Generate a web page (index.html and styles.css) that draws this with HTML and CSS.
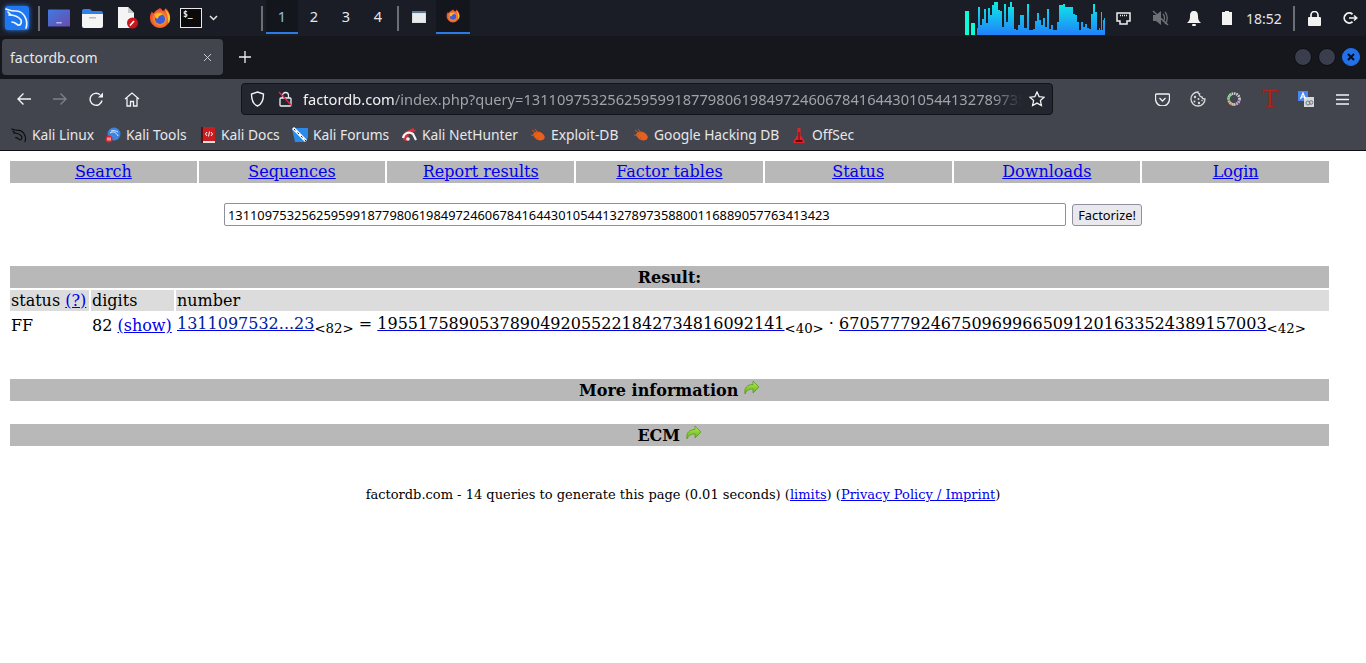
FILE: index.html
```html
<!DOCTYPE html>
<html>
<head>
	<meta charset="utf-8">
	<title>factordb.com</title>
	<link rel="stylesheet" href="styles.css">
</head>
<body>
	<svg class="defs" width="0" height="0">
		<defs>
			<linearGradient id="spec" gradientUnits="userSpaceOnUse" x1="0" y1="0" x2="0" y2="34">
				<stop offset="0" stop-color="#0cf0e4"/>
				<stop offset="1" stop-color="#2180fb"/>
			</linearGradient>
			<linearGradient id="folder" x1="0" y1="0" x2="1" y2="1">
				<stop offset="0" stop-color="#3f7be0"/>
				<stop offset="1" stop-color="#6a4bb0"/>
			</linearGradient>
			<linearGradient id="arrow" x1="0" y1="0" x2="0" y2="1">
				<stop offset="0" stop-color="#b6ec4a"/>
				<stop offset="1" stop-color="#5fb01e"/>
			</linearGradient>
			<radialGradient id="fox" cx="0.5" cy="0.55" r="0.55">
				<stop offset="0.35" stop-color="#f7a12c"/>
				<stop offset="1" stop-color="#e8372e"/>
			</radialGradient>
			<symbol id="dragon" viewBox="0 0 24 24">
				<path d="M1 3c3 1 5 2 10 2 4 0 8 3 10 8 1 3 1 6 0 9M4 9c4 0 9 1 12 5 1 3-1 6-3 5-2-1-3-3-6-3M3 6l3 3" fill="none" stroke-width="1.700" stroke-linecap="round"/>
			</symbol>
			<symbol id="foxicon" viewBox="0 0 24 24">
				<path d="M12 1c2 1 2 2 3 3 2 0 3-1 3-3 3 2 5 6 5 10 0 7-5 12-11 12S1 18 1 12c0-3 1-5 2-7l2 2c1-2 3-4 7-6z" fill="url(#fox)"/>
				<path d="M17 2c3 2 6 6 6 10 0 3-1 5-2 6 0-6-1-11-4-16z" fill="#fbc02d"/>
				<circle cx="12" cy="13" r="5.500" fill="#3f5bd8"/>
				<path d="M6 8c3-2 7-2 9 0l-4 2-2 3c-2-1-3-3-3-5z" fill="#ffb52e"/>
			</symbol>
			<symbol id="bug" viewBox="0 0 16 14">
				<ellipse cx="9" cy="8" rx="6" ry="4" transform="rotate(25 9 8)" fill="#e8601c"/>
				<path d="M2 2l5 4M5 1l3 4M1 7l5 1M7 12l1-3" stroke="#c9581f" stroke-width="1" fill="none"/>
			</symbol>
			<symbol id="goarrow" viewBox="0 0 16 15">
				<path d="M1 14C0 8 3 4.500 9 4.500V1l6 6-6 6V9c-4 0-6 1-8 5z" fill="url(#arrow)" stroke="#5a9a1e" stroke-width=".8"/>
			</symbol>
		</defs>
	</svg>

	<div class="panel">
		<div class="kali">
			<svg width="24" height="24" viewBox="0 0 24 24" stroke="#eef6ff"><use href="#dragon"/></svg>
		</div>
		<span class="vsep first"></span>
		<svg class="launcher l1" width="22" height="18" viewBox="0 0 23 18"><rect width="23" height="18" rx="1" fill="url(#folder)"/><path d="M9 14h5" stroke="#e8e8ff" stroke-width="1.400" stroke-dasharray="1.200 .7"/></svg>
		<svg class="launcher l2" width="23" height="20" viewBox="0 0 23 20"><path d="M1 3a2 2 0 0 1 2-2h6l2 2h9a2 2 0 0 1 2 2v3H1z" fill="#2f80e8"/><path d="M1 6h21v12a2 2 0 0 1-2 2H3a2 2 0 0 1-2-2z" fill="#f4f4f4"/><rect x="8" y="9" width="7" height="1.500" fill="#bcbcbc"/></svg>
		<svg class="launcher l3" width="22" height="22" viewBox="0 0 22 22"><path d="M1 0h10l6 6v15H1z" fill="#f4f4f4"/><path d="M11 0l6 6h-6z" fill="#c8c8c8"/><circle cx="15.500" cy="16" r="5.500" fill="#c8161d"/><path d="M13 18.500l4-4.500" stroke="#fff" stroke-width="1.600"/></svg>
		<svg class="launcher l4" width="22" height="22"><use href="#foxicon"/></svg>
		<div class="term">$_</div>
		<svg class="chev" width="9" height="6" viewBox="0 0 9 6"><path d="M1 1l3.500 3.500L8 1" fill="none" stroke="#e6e6e6" stroke-width="1.500"/></svg>
		<span class="vsep second"></span>
		<div class="ws active">1</div>
		<div class="ws">2</div>
		<div class="ws">3</div>
		<div class="ws">4</div>
		<span class="vsep third"></span>
		<div class="task">
			<svg width="14" height="12" viewBox="0 0 14 12"><rect width="14" height="12" fill="#d8dde0"/><rect width="14" height="2" fill="#5a7c96"/><rect x="1" y="2.500" width="12" height="8.500" fill="#e8ecec"/></svg>
		</div>
		<div class="task active">
			<svg width="14" height="14"><use href="#foxicon"/></svg>
		</div>

		<div class="tray">
			<svg class="spectrum" width="140" height="34" viewBox="0 0 140 34">
				<rect x="0" y="10" width="4" height="24" fill="#0dfbd6"/>
				<rect x="6" y="22" width="4" height="12" fill="#0dfbd6"/>
				<rect x="12" y="29" width="128" height="5" fill="url(#spec)"/>
				<path fill="url(#spec)" d="M12 34v-7h1v7zM13 34v-28h2v28zM15 34v-10h2v10zM17 34v-16h2v16zM19 34v-26h2v26zM21 34v-12h2v12zM23 34v-27h2v27zM25 34v-20h2v20zM27 34v-30h2v30zM29 34v-33h4v33zM33 34v-25h2v25zM35 34v-24h2v24zM37 34v-8h2v8zM39 34v-31h2v31zM41 34v-13h2v13zM43 34v-28h2v28zM45 34v-33h2v33zM47 34v-28h2v28zM49 34v-6h2v6zM51 34v-4h2v4zM53 34v-10h2v10zM55 34v-20h2v20zM57 34v-20h2v20zM59 34v-7h3v7zM62 34v-31h2v31zM64 34v-3h2v3zM66 34v-3h2v3zM68 34v-6h2v6zM70 34v-14h2v14zM72 34v-22h2v22zM74 34v-15h2v15zM76 34v-10h2v10zM78 34v-17h2v17zM80 34v-8h2v8zM82 34v-26h2v26zM84 34v-6h2v6zM86 34v-10h2v10zM88 34v-5h2v5zM90 34v-5h2v5zM92 34v-13h2v13zM94 34v-30h4v30zM98 34v-31h2v31zM100 34v-28h6v28zM106 34v-28h2v28zM108 34v-21h2v21zM110 34v-20h2v20zM112 34v-13h2v13zM114 34v-5h2v5zM116 34v-13h2v13zM118 34v-8h2v8zM120 34v-11h2v11zM122 34v-7h2v7zM124 34v-6h2v6zM126 34v-21h2v21zM128 34v-31h2v31zM130 34v-23h2v23zM132 34v-5h2v5zM134 34v-7h1v7zM135 34v-4h1v4zM136 34v-23h1v23zM137 34v-5h1v5zM138 34v-15h1v15zM139 34v-17h1v17z"/>
			</svg>
			<svg class="tr net" width="15" height="13" viewBox="0 0 15 13"><path d="M1 1h13v8h-3v3H4V9H1z" fill="none" stroke="#eee" stroke-width="1.500"/><path d="M4 3.500h7" stroke="#eee" stroke-width="1.500" stroke-dasharray="1 1"/></svg>
			<svg class="tr mute" width="18" height="16" viewBox="0 0 18 16"><path d="M1 5h3l5-4v14l-5-4H1z" fill="#6f7075"/><path d="M11 4c2 2 2 6 0 8M13 2c3 3 3 9 0 12" fill="none" stroke="#6f7075" stroke-width="1.300"/><path d="M1 1l15 14" stroke="#6f7075" stroke-width="1.500"/></svg>
			<svg class="tr bell" width="14" height="15" viewBox="0 0 14 15"><path d="M7 0c3 0 4 2 4 5 0 4 1 5 3 7H0c2-2 3-3 3-7 0-3 1-5 4-5z" fill="#f2f2f0"/><rect x="5" y="13" width="4" height="2" rx="1" fill="#f2f2f0"/></svg>
			<svg class="tr batt" width="10" height="14" viewBox="0 0 10 14"><path d="M3 0h4v1h3v13H0V1h3z" fill="#f2f2f0"/></svg>
			<div class="clock">18:52</div>
			<span class="vsep fourth"></span>
			<svg class="tr lock" width="13" height="15" viewBox="0 0 13 15"><rect y="6" width="13" height="9" rx="1" fill="#f2f2f0"/><path d="M3 7V4a3.500 3.500 0 0 1 7 0v3" fill="none" stroke="#f2f2f0" stroke-width="1.700"/></svg>
			<svg class="tr quit" width="15" height="12" viewBox="0 0 15 12"><path d="M9.500 2.200A5 5 0 1 0 9.500 9.800" fill="none" stroke="#f2f2f0" stroke-width="1.800"/><path d="M6 6h7M11 3.500L13.800 6 11 8.500" fill="none" stroke="#f2f2f0" stroke-width="1.500"/></svg>
		</div>
	</div>

	<div class="tabbar">
		<div class="tab">
			<span class="tab-title">factordb.com</span>
			<svg width="9" height="9" viewBox="0 0 9 9"><path d="M1 1l7 7M8 1L1 8" stroke="#c9cace" stroke-width="1"/></svg>
		</div>
		<svg class="newtab" width="12" height="12" viewBox="0 0 12 12"><path d="M6 0v12M0 6h12" stroke="#f0f0f2" stroke-width="1.300"/></svg>
		<div class="winbtns">
			<span class="winbtn"></span>
			<span class="winbtn"></span>
			<span class="winbtn close">
				<svg width="8" height="8" viewBox="0 0 8 8"><path d="M1 1l6 6M7 1L1 7" stroke="#08101e" stroke-width="2"/></svg>
			</span>
		</div>
	</div>

	<div class="navbar">
		<svg class="nb back" width="16" height="14" viewBox="0 0 16 14"><path d="M15 7H2M7.500 1.500L2 7l5.500 5.500" fill="none" stroke="#f2f2f3" stroke-width="1.400"/></svg>
		<svg class="nb fwd" width="16" height="14" viewBox="0 0 16 14"><path d="M1 7h13M8.500 1.500L14 7l-5.500 5.500" fill="none" stroke="#7f8085" stroke-width="1.400"/></svg>
		<svg class="nb reload" width="15" height="15" viewBox="0 0 15 15"><path d="M13 8.500A6 6 0 1 1 11 2.700" fill="none" stroke="#f2f2f3" stroke-width="1.400"/><path d="M14 .5v5h-5z" fill="#f2f2f3"/></svg>
		<svg class="nb home" width="16" height="15" viewBox="0 0 16 15"><path d="M1 7l7-6 7 6M3 6v8h3.500V9.500h3V14H13V6" fill="none" stroke="#f2f2f3" stroke-width="1.300"/></svg>
		<div class="urlbar">
			<svg class="shield" width="15" height="16" viewBox="0 0 15 16"><path d="M7.500 1l6 2c0 6-1 10-6 12C2.500 13 1.500 9 1.500 3z" fill="none" stroke="#f2f2f3" stroke-width="1.400"/></svg>
			<svg class="insecure" width="15" height="16" viewBox="0 0 15 16"><rect x="2" y="7" width="11" height="8" rx="1" fill="none" stroke="#f2f2f3" stroke-width="1.300"/><path d="M4.500 7V4.500a3 3 0 0 1 6 0V7" fill="none" stroke="#f2f2f3" stroke-width="1.300"/><path d="M1 1l13 14" stroke="#e22850" stroke-width="1.300"/></svg>
			<div class="url"><span class="host">factordb.com</span>/index.php?query=1311097532562595991877980619849724606784164430105441327897358800116889057763413423</div>
			<svg class="star" width="16" height="16" viewBox="0 0 16 16"><path d="M8 1l2.100 4.600 5 .6-3.700 3.400 1 4.900L8 12.100l-4.400 2.400 1-4.900L.9 6.200l5-.6z" fill="none" stroke="#f2f2f3" stroke-width="1.300"/></svg>
		</div>
		<div class="tools">
			<svg width="15" height="13" viewBox="0 0 15 13"><path d="M1.500 1h12a1 1 0 0 1 1 1v4a7 7 0 0 1-14 0V2a1 1 0 0 1 1-1z" fill="none" stroke="#f2f2f3" stroke-width="1.300"/><path d="M4.500 5l3 3 3-3" fill="none" stroke="#f2f2f3" stroke-width="1.300"/></svg>
			<svg width="16" height="16" viewBox="0 0 16 16"><path d="M8 1a7 7 0 1 0 7 7c-2 0-3-1-3-2-2 0-3-2-2.500-3C8.500 3 8 2 8 1z" fill="none" stroke="#d8d9dc" stroke-width="1.300"/><g fill="#d8d9dc"><circle cx="5" cy="6" r="1.200"/><circle cx="4.500" cy="10.500" r="1"/><circle cx="8.500" cy="8" r="1"/><circle cx="9" cy="12" r="1.200"/><circle cx="12" cy="9.500" r=".8"/></g></svg>
			<svg width="16" height="16" viewBox="0 0 16 16" fill="none" stroke-width="2.600"><circle cx="8" cy="8" r="5.500" stroke="#d3d3d3" stroke-dasharray="1.500 .8"/><path d="M2.500 8a5.500 5.500 0 0 1 3-4.900" stroke="#7fd08a" stroke-dasharray="1.500 .8"/><path d="M8 13.500a5.500 5.500 0 0 1-5-3.500" stroke="#e2a05a" stroke-dasharray="1.500 .8"/><path d="M13.500 8a5.500 5.500 0 0 1-3 4.900" stroke="#c98ad8" stroke-dasharray="1.500 .8"/></svg>
			<div class="red-t">T</div>
			<svg width="16" height="16" viewBox="0 0 16 16"><rect x="0" y="0" width="10" height="10" fill="#4a86f0"/><rect x="6" y="6" width="10" height="10" fill="#d6d8da"/><path d="M2.500 8L5 2l2.500 6M3.500 6h3" fill="none" stroke="#fff" stroke-width="1.200"/><circle cx="10" cy="12" r="2" fill="none" stroke="#6f7a82" stroke-width="1"/><circle cx="13" cy="11.500" r="1.800" fill="none" stroke="#6f7a82" stroke-width="1"/></svg>
			<svg width="13" height="11" viewBox="0 0 13 11"><path d="M0 1h13M0 5.500h13M0 10h13" stroke="#f2f2f3" stroke-width="1.300"/></svg>
		</div>
	</div>

	<div class="bookmarks">
		<div class="bm b1"><svg stroke="#0c0c0e"><use href="#dragon"/></svg>Kali Linux</div>
		<div class="bm b2">
			<svg viewBox="0 0 16 16"><circle cx="9" cy="7" r="6.500" fill="#3c84e0"/><path d="M5 6c3-2 6-1 8 3M6 4c3-1 5 0 7 1" fill="none" stroke="#dcecff" stroke-width="1"/><circle cx="4" cy="12" r="3.500" fill="#d8262c"/><path d="M3 10.500v3M5 10.500v3" stroke="#fff" stroke-width="1"/></svg>Kali Tools
		</div>
		<div class="bm b3">
			<svg viewBox="0 0 14 16"><rect x="1" y="0" width="13" height="14" fill="#c81e22"/><rect x="1" y="14" width="13" height="2" fill="#e0e0e0"/><rect x="0" y="0" width="2" height="16" fill="#5a1014"/><path d="M6 5L4.500 7 6 9M10 5l1.500 2L10 9M8.500 4.500l-1 5" fill="none" stroke="#fff" stroke-width="1"/></svg>Kali Docs
		</div>
		<div class="bm b4">
			<svg viewBox="0 0 16 16"><path d="M0 2l3-1 13 0v10l-4 4H3z" fill="#2c8ae8"/><path d="M1 1l13 13" stroke="#fff" stroke-width="3"/><path d="M2 2l12 12" stroke="#222" stroke-width="1" stroke-dasharray="2 3"/></svg>Kali Forums
		</div>
		<div class="bm b5">
			<svg viewBox="0 0 16 16"><path d="M2 13L4 5l8-4 3 3-7 3-2 7z" fill="#d8303a"/><path d="M2 11c1-5 6-7 10-4l3 6" fill="none" stroke="#f4f4f4" stroke-width="2.200"/><circle cx="7" cy="12" r="1.800" fill="#f4f4f4"/></svg>Kali NetHunter
		</div>
		<div class="bm b6"><svg><use href="#bug"/></svg>Exploit-DB</div>
		<div class="bm b7"><svg><use href="#bug"/></svg>Google Hacking DB</div>
		<div class="bm b8">
			<svg viewBox="0 0 14 16"><path d="M5.500 1h3v7l4 6v2h-11v-2l4-6z" fill="#e2242a"/><path d="M6.500 5h1v9h-1zM3.500 13h7v2h-7z" fill="#5a0c10"/></svg>OffSec
		</div>
	</div>

	<div class="page">
		<table class="menu">
			<tr>
				<td><a href="#">Search</a></td>
				<td><a href="#">Sequences</a></td>
				<td><a href="#">Report results</a></td>
				<td><a href="#">Factor tables</a></td>
				<td><a href="#">Status</a></td>
				<td><a href="#">Downloads</a></td>
				<td><a href="#">Login</a></td>
			</tr>
		</table>

		<div class="search">
			<input class="query" type="text" value="1311097532562595991877980619849724606784164430105441327897358800116889057763413423">
			<button class="go">Factorize!</button>
		</div>

		<table class="result">
			<tr><th class="bar" colspan="3">Result:</th></tr>
			<tr class="head">
				<td class="c-status">status <a href="#">(?)</a></td>
				<td class="c-digits">digits</td>
				<td>number</td>
			</tr>
			<tr>
				<td>FF</td>
				<td>82 <a href="#">(show)</a></td>
				<td class="c-number"><a class="comp" href="#"><span class="n-blue">1311097532...23</span></a><sub>&lt;82&gt;</sub> = <a href="#"><span class="n-black">1955175890537890492055221842734816092141</span></a><sub>&lt;40&gt;</sub> · <a href="#"><span class="n-black">670577792467509699665091201633524389157003</span></a><sub>&lt;42&gt;</sub></td>
			</tr>
		</table>

		<table class="section more">
			<tr><th class="bar">More information <svg class="go-arrow" width="16" height="15"><use href="#goarrow"/></svg></th></tr>
		</table>
		<table class="section ecm">
			<tr><th class="bar">ECM <svg class="go-arrow" width="16" height="15"><use href="#goarrow"/></svg></th></tr>
		</table>

		<p class="foot">factordb.com - 14 queries to generate this page (0.01 seconds) (<a href="#">limits</a>) (<a href="#">Privacy Policy / Imprint</a>)</p>
	</div>
</body>
</html>
```

FILE: styles.css
```css
* {
	box-sizing: border-box;
}
html, body {
	margin: 0;
	height: 663px;
	overflow: hidden;
	background: #fff;
}
body {
	font-family: "Noto Sans", sans-serif;
}
.defs {
	position: absolute;
}

/* desktop panel */
.panel {
	height: 36px;
	background: #1a1c26;
	display: flex;
	align-items: center;
	color: #e4e8ee;
	font-size: 14px;
}
.kali {
	width: 24px;
	height: 24px;
	margin-left: 5px;
	border-radius: 3px;
	background: #1f78f2;
	box-shadow: 0 0 5px #2a80f8;
}
.vsep {
	width: 2px;
	height: 25px;
	background: #6c6e74;
	flex: none;
}
.vsep.first { margin-left: 9px; }
.launcher { flex: none; }
.l1 { margin-left: 8px; }
.l2 { margin-left: 11px; }
.l3 { margin-left: 13px; }
.l4 { margin-left: 10px; }
.term {
	width: 22px;
	height: 20px;
	margin-left: 9px;
	border: 1px solid #e8e8e8;
	background: #0a0a0c;
	color: #f0f0f0;
	font: bold 8px/11px "DejaVu Sans Mono", monospace;
	padding-left: 2px;
}
.chev { margin-left: 7px; }
.vsep.second { margin-left: 43px; }
.ws {
	width: 32px;
	height: 34px;
	align-self: flex-start;
	line-height: 32px;
	text-align: center;
	font-size: 14.500px;
}
.vsep.second + .ws { margin-left: 3px; }
.ws.active {
	background: #14161e;
	border-bottom: 2px solid #2a7be8;
	color: #8fc0f4;
}
.vsep.third { margin-left: 3px; }
.task {
	width: 34px;
	height: 34px;
	align-self: flex-start;
	display: flex;
	align-items: center;
	justify-content: center;
	padding-bottom: 1px;
}
.vsep.third + .task { margin-left: 3px; }
.task.active {
	background: #14161e;
	border-bottom: 2px solid #2a7be8;
}
.tray {
	margin-left: auto;
	display: flex;
	align-items: center;
	height: 36px;
}
.net { margin-left: 11px; }
.mute { margin-left: 21px; }
.bell { margin-left: 17px; }
.batt { margin-left: 21px; }
.clock {
	margin-left: 14px;
	width: 36px;
	font-size: 14px;
}
.vsep.fourth { margin-left: 11px; }
.lock { margin-left: 13px; }
.quit { margin-left: 22px; margin-right: 8px; }

/* tabs */
.tabbar {
	height: 43px;
	background: #15171c;
	display: flex;
	align-items: center;
	padding: 3px 6px 4px 2px;
}
.tab {
	width: 221px;
	height: 36px;
	background: #42454e;
	border-radius: 4px;
	display: flex;
	align-items: center;
	justify-content: space-between;
	padding: 0 11px 0 8px;
	color: #e8e8ea;
	font-size: 14px;
}
.newtab { margin-left: 16px; }
.winbtns {
	margin-left: auto;
	display: flex;
	gap: 6px;
}
.winbtn {
	width: 18px;
	height: 18px;
	border-radius: 50%;
	background: #3a3e4c;
	border: 1px solid #0c0d12;
	display: flex;
	align-items: center;
	justify-content: center;
}
.winbtn.close {
	background: #2270ea;
	border-color: #2270ea;
}

/* nav toolbar */
.navbar {
	height: 43px;
	background: #42454e;
	display: flex;
	align-items: center;
	padding: 3px 0 6px;
}
.nb { flex: none; }
.back { margin-left: 16px; }
.fwd { margin-left: 20px; }
.reload { margin-left: 21px; }
.home { margin-left: 20px; }
.urlbar {
	width: 812px;
	height: 32px;
	margin-left: 101px;
	background: #23252f;
	border: 1px solid #121318;
	border-radius: 4px;
	display: flex;
	align-items: center;
	padding-left: 8px;
}
.shield { flex: none; }
.insecure { margin-left: 13px; flex: none; }
.url {
	margin-left: 10px;
	width: 719px;
	flex: none;
	white-space: nowrap;
	overflow: hidden;
	color: #a2a3a8;
	font-size: 14.670px;
	-webkit-mask-image: linear-gradient(to right, #000 96%, transparent);
	mask-image: linear-gradient(to right, #000 96%, transparent);
}
.host { color: #f2f2f3; }
.star { margin-left: 7px; flex: none; }
.tools {
	margin-left: 91px;
	display: grid;
	grid-auto-flow: column;
	grid-auto-columns: 36px;
	justify-items: center;
	align-items: center;
}
.red-t {
	font: 26px/24px "Liberation Serif", serif;
	color: #b0261c;
	text-shadow: 1px 0 0 #6e1a12;
}

/* bookmarks */
.bookmarks {
	height: 29px;
	background: #42454e;
	border-bottom: 1px solid #0e0f12;
	display: flex;
	align-items: center;
	padding-left: 11px;
	padding-bottom: 3px;
	color: #e8e8ea;
	font-size: 13.800px;
}
.bm {
	display: flex;
	align-items: center;
	gap: 5px;
	white-space: nowrap;
	flex: none;
}
.bm svg {
	width: 16px;
	height: 16px;
	flex: none;
}
.b1 { width: 94px; }
.b2 { width: 95px; }
.b3 { width: 92px; }
.b4 { width: 109px; }
.b5 { width: 129px; }
.b6 { width: 103px; }
.b7 { width: 158px; }

/* factordb page */
.page {
	padding: 8px;
	font-family: "DejaVu Serif", serif;
	font-size: 16px;
	color: #000;
}
a {
	color: #0000ee;
}
table {
	width: 1323px;
	border-spacing: 2px;
	font-size: 16px;
}
td, th {
	padding: 1px;
}
.menu td {
	width: 14.28%;
	height: 22px;
	padding: 0 1px 2px;
	background: #b8b8b8;
	text-align: center;
}
.search {
	display: flex;
	justify-content: center;
	align-items: center;
	gap: 6px;
	margin-top: 18px;
}
.query {
	width: 842px;
	height: 23px;
	padding: 1px 3px;
	border: 1px solid #8f8f9d;
	border-radius: 2px;
	font: 12.840px "Noto Sans", sans-serif;
	color: #000;
}
.go {
	width: 70px;
	height: 22px;
	padding: 0;
	border: 1px solid #8f8f9d;
	border-radius: 3px;
	background: #e9e9ed;
	font: 12.840px "Noto Sans", sans-serif;
	color: #000;
}
.result {
	margin-top: 38px;
}
.bar {
	height: 22px;
	background: #b8b8b8;
	text-align: center;
	font-weight: bold;
}
.head td {
	background: #dcdcdc;
}
.c-status { width: 79px; }
.c-digits { width: 83px; }
.c-number {
	white-space: nowrap;
}
.n-blue { color: #002099; }
.n-black { color: #000; }
sub {
	font-size: 13.333px;
}
.section.more { margin-top: 38px; }
.section.ecm { margin-top: 19px; }
.go-arrow {
	vertical-align: 1px;
}
.foot {
	margin: 39px 0 0;
	text-align: center;
	font-size: 13px;
}
```
